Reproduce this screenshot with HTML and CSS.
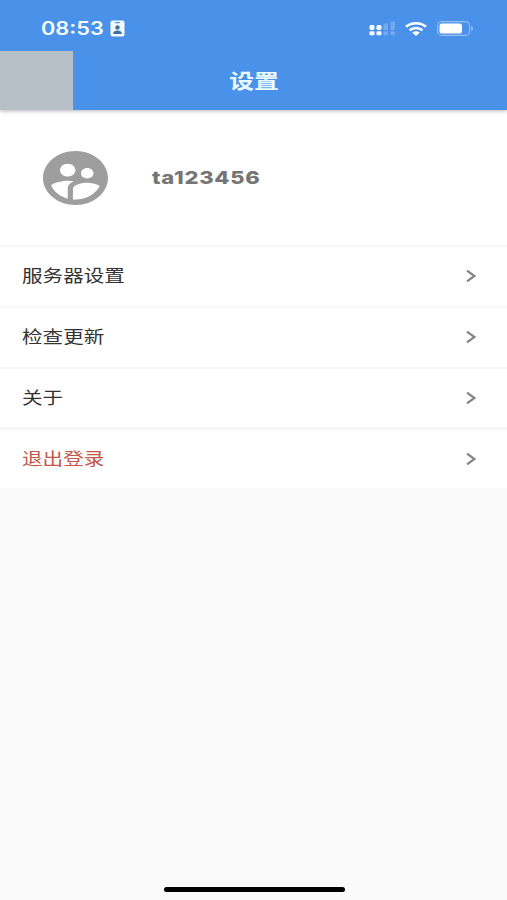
FILE: index.html
```html
<!doctype html>
<html lang="zh-CN">
<head>
    <meta charset="UTF-8">
    <meta name="viewport" content="width=device-width, initial-scale=1.0">
    <title>设置</title>
    <link rel="stylesheet" href="styles.css">
</head>
<body>
<div class="page">
    <header class="header">
        <div class="status">
            <span class="status-time">08:53</span>
            <svg class="status-card" viewBox="0 0 15 17">
                <rect x="0.5" y="0.5" width="14" height="16" rx="2" fill="#f4fbff"/>
                <rect x="5" y="2" width="5" height="1.2" rx=".6" fill="#4a92e9"/>
                <circle cx="7.5" cy="7.5" r="2.2" fill="#3f6f9f"/>
                <path d="M3.3 14v-1c0-1.5 2-2.5 4.2-2.5s4.2 1 4.2 2.5v1z" fill="#3f6f9f"/>
            </svg>
            <div class="status-right">
                <svg class="status-signal" viewBox="0 0 27 15">
                    <g fill="#fff">
                        <rect x="0.5" y="4" width="5" height="5" rx="1.8"/>
                        <rect x="7.5" y="4" width="5" height="5" rx="1.8"/>
                        <rect x="0.5" y="10.3" width="5" height="4" rx="1.3"/>
                        <rect x="7.5" y="10.3" width="5" height="4" rx="1.3"/>
                    </g>
                    <g fill="#fff" opacity=".22">
                        <rect x="14.5" y="2.5" width="4.5" height="6.5" rx="1"/>
                        <rect x="21.5" y="0.5" width="4.5" height="8.5" rx="1"/>
                        <rect x="14.5" y="10.3" width="4.5" height="4" rx="1"/>
                        <rect x="21.5" y="10.3" width="4.5" height="4" rx="1"/>
                    </g>
                </svg>
                <svg class="status-wifi" viewBox="0 0 22 14">
                    <g fill="none" stroke="#fff" stroke-width="2.5">
                        <path d="M1 4.8C6.5.1 15.5.1 21 4.8"/>
                        <path d="M4.6 8.3c3.7-3.2 9.1-3.2 12.8 0"/>
                    </g>
                    <path d="M7.3 10.7c2.2-1.9 5.2-1.9 7.4 0L11 14z" fill="#fff"/>
                </svg>
                <svg class="status-battery" viewBox="0 0 37 15">
                    <rect x="0.6" y="0.6" width="32" height="13.8" rx="4" fill="none" stroke="#fff" stroke-opacity=".42" stroke-width="1.1"/>
                    <rect x="2.5" y="2.5" width="22.5" height="10" rx="2.3" fill="#fff"/>
                    <path d="M34.2 5.2c2.4.8 2.4 3.8 0 4.6z" fill="#fff" opacity=".45"/>
                </svg>
            </div>
        </div>
        <div class="nav">
            <div class="nav-back"></div>
            <h1 class="nav-title"><span>设置</span></h1>
        </div>
    </header>

    <section class="user">
        <svg class="user-avatar" viewBox="2 2 20 20" preserveAspectRatio="none">
            <path fill="#9e9e9e" d="M12 2C6.48 2 2 6.48 2 12s4.48 10 10 10 10-4.48 10-10S17.52 2 12 2zm3.61 6.34c1.07 0 1.93.86 1.93 1.93 0 1.07-.86 1.93-1.93 1.93-1.07 0-1.93-.86-1.93-1.93-.01-1.07.86-1.93 1.93-1.93zm-6-1.58c1.3 0 2.36 1.06 2.36 2.36 0 1.3-1.06 2.36-2.36 2.36s-2.36-1.06-2.36-2.36c0-1.31 1.05-2.36 2.36-2.36zm0 9.13v3.75c-2.4-.75-4.3-2.6-5.14-4.96 1.05-1.12 3.67-1.69 5.14-1.69.53 0 1.2.08 1.9.22-1.64.87-1.9 2.02-1.9 2.68zM12 20c-.27 0-.53-.01-.79-.04v-4.07c0-1.42 2.94-2.13 4.4-2.13 1.07 0 2.92.39 3.84 1.15C18.28 17.88 15.39 20 12 20z"/>
        </svg>
        <span class="user-name">ta123456</span>
    </section>

    <ul class="menu">
        <li class="menu-item">
            <span class="menu-text">服务器设置</span>
            <svg class="menu-arrow" viewBox="0 0 10 14"><path d="M1 1.7L8.4 7 1 12.3"/></svg>
        </li>
        <li class="menu-item">
            <span class="menu-text">检查更新</span>
            <svg class="menu-arrow" viewBox="0 0 10 14"><path d="M1 1.7L8.4 7 1 12.3"/></svg>
        </li>
        <li class="menu-item">
            <span class="menu-text">关于</span>
            <svg class="menu-arrow" viewBox="0 0 10 14"><path d="M1 1.7L8.4 7 1 12.3"/></svg>
        </li>
        <li class="menu-item logout">
            <span class="menu-text">退出登录</span>
            <svg class="menu-arrow" viewBox="0 0 10 14"><path d="M1 1.7L8.4 7 1 12.3"/></svg>
        </li>
    </ul>

    <div class="home-bar"></div>
</div>
</body>
</html>
```
FILE: styles.css
```css
* {
    margin: 0;
    padding: 0;
    box-sizing: border-box;
}
body {
    font-family: "Inter", "Noto Sans CJK SC", sans-serif;
    background: #fafafa;
}
.page {
    height: 900px;
    display: flex;
    flex-direction: column;
    overflow: hidden;
}
.header {
    height: 110px;
    background: #4a92e9;
    box-shadow: 0 1px 4px rgba(0,0,30,.3);
    z-index: 1;
}
.status {
    height: 51px;
    padding: 6px 33px 0 41px;
    display: flex;
    align-items: center;
}
.status-time {
    width: 69px;
    font-size: 18px;
    font-weight: 600;
    line-height: 24px;
    color: #f4fbff;
    transform: scaleX(1.21);
    transform-origin: left;
}
.status-card {
    width: 15px;
    height: 17px;
}
.status-right {
    margin-left: auto;
    display: flex;
    align-items: center;
}
.status-signal {
    width: 27px;
    height: 15px;
}
.status-wifi {
    width: 22px;
    height: 14px;
    margin: 0 10px 0 9px;
}
.status-battery {
    width: 37px;
    height: 15px;
}
.nav {
    height: 59px;
    display: flex;
    align-items: center;
}
.nav-back {
    width: 73px;
    height: 59px;
    background: #b7bfc7;
}
.nav-title {
    flex: 1;
    padding-right: 73px;
    font-size: 20px;
    font-weight: 700;
    text-align: center;
    color: #e9fbff;
}
.nav-title span {
    display: inline-block;
    transform: scaleX(1.24);
}
.user {
    height: 135px;
    padding-left: 43px;
    background: #fff;
    display: flex;
    align-items: center;
}
.user-avatar {
    width: 65px;
    height: 54px;
}
.user-name {
    margin-left: 44px;
    font-size: 18px;
    font-weight: 800;
    letter-spacing: .6px;
    color: #757575;
    transform: scaleX(1.22);
    transform-origin: left;
}
.menu {
    list-style: none;
    background: #fff;
}
.menu-item {
    height: 60.75px;
    padding: 0 31px 0 22px;
    border-top: 2px solid #f7f7f7;
    display: flex;
    align-items: center;
    justify-content: space-between;
}
.menu-text {
    font-size: 17px;
    line-height: 24px;
    color: #333;
    transform: scaleX(1.21);
    transform-origin: left;
}
.menu-arrow {
    width: 10px;
    height: 14px;
    fill: none;
    stroke: #858585;
    stroke-width: 2.2;
}
.menu-item.logout {
    border-top: 3px solid #f7f7f7;
}
.menu-item.logout .menu-text {
    color: #c4564a;
}
.home-bar {
    width: 181px;
    height: 5px;
    margin: auto auto 8px 164px;
    border-radius: 3px;
    background: #000;
}
```
